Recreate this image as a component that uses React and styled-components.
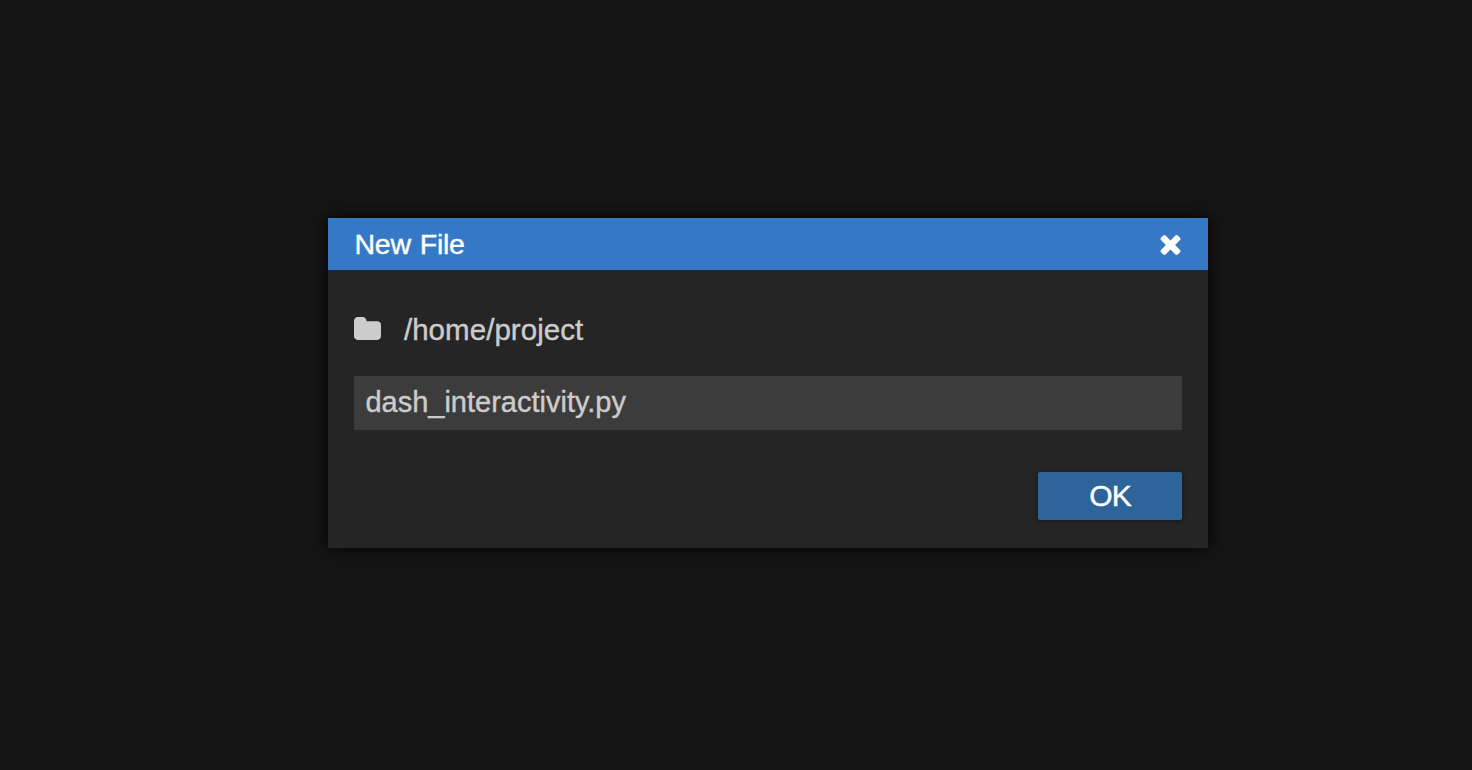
import React from "react";
import styled, { createGlobalStyle } from "styled-components";

const GlobalStyle = createGlobalStyle`
  * { box-sizing: border-box; }
  body {
    margin: 0;
    background: #151515;
    font-family: "Liberation Sans", Arial, sans-serif;
    overflow: hidden;
  }
`;

const Overlay = styled.main`
  height: 100vh;
  padding: 218px 264px 0 328px;
  background: #151515;
`;

const Dialog = styled.section`
  width: 880px;
  height: 330px;
  background: #252525;
  box-shadow: 0 0 16px #000;
`;

const TitleBar = styled.header`
  display: flex;
  align-items: center;
  justify-content: space-between;
  height: 52px;
  padding: 0 27px 0 26.5px;
  background: #3579c6;
  color: #fff;
`;

const Label = styled.span`
  display: block;
  font-size: ${(p) => p.$size || 29}px;
  line-height: 32px;
  letter-spacing: ${(p) => p.$spacing || 0}px;
  word-spacing: ${(p) => p.$wordGap || 0}px;
  white-space: nowrap;
  -webkit-text-stroke: 0.4px currentColor;
`;

const CloseButton = styled.button`
  display: flex;
  padding: 0;
  margin-top: 2px;
  border: 0;
  background: none;
  color: #fff;
`;

const Body = styled.div`
  display: flex;
  flex-direction: column;
  padding: 44px 26px 28px;
  color: #ccc;
`;

const PathRow = styled.div`
  display: flex;
  align-items: center;
  gap: 22.5px;
  height: 32px;
`;

const FolderIcon = styled.svg`
  width: 27px;
  height: 23px;
  margin: 0 0 3px 0.4px;
`;

const FileName = styled.div`
  display: flex;
  align-items: center;
  height: 54px;
  margin-top: 30px;
  padding: 0 11.4px 2px;
  background: #3c3c3c;
`;

const OkButton = styled.button`
  align-self: flex-end;
  display: flex;
  align-items: center;
  justify-content: center;
  width: 144px;
  height: 48px;
  margin-top: 42px;
  padding: 0;
  border: 0;
  border-radius: 2px;
  background: #2d6499;
  color: #fff;
  font-family: inherit;
  box-shadow: 0 1px 5px rgba(0, 0, 0, 0.4);
`;

export default function App() {
  return (
    <>
      <GlobalStyle />
      <Overlay>
        <Dialog role="dialog" aria-label="New File">
          <TitleBar>
            <Label $size={28.5} $spacing={-0.25} $wordGap={1.3}>New File</Label>
            <CloseButton aria-label="Close">
              <svg width="21" height="20" viewBox="302 366 1188 1188">
                <path
                  fill="currentColor"
                  d="M1490 1322q0 40-28 68l-136 136q-28 28-68 28t-68-28l-294-294-294 294q-28 28-68 28t-68-28l-136-136q-28-28-28-68t28-68l294-294-294-294q-28-28-28-68t28-68l136-136q28-28 68-28t68 28l294 294 294-294q28-28 68-28t68 28l136 136q28 28 28 68t-28 68l-294 294 294 294q28 28 28 68z"
                />
              </svg>
            </CloseButton>
          </TitleBar>
          <Body>
            <PathRow>
              <FolderIcon viewBox="64 128 1664 1408">
                <path
                  fill="currentColor"
                  d="M1728 608v704q0 92-66 158t-158 66h-1216q-92 0-158-66t-66-158v-960q0-92 66-158t158-66h320q92 0 158 66t66 158v32h672q92 0 158 66t66 158z"
                />
              </FolderIcon>
              <Label $size={29.5} $spacing={0.05}>/home/project</Label>
            </PathRow>
            <FileName>
              <Label>dash_interactivity.py</Label>
            </FileName>
            <OkButton>
              <Label $size={30} $spacing={-1}>OK</Label>
            </OkButton>
          </Body>
        </Dialog>
      </Overlay>
    </>
  );
}
